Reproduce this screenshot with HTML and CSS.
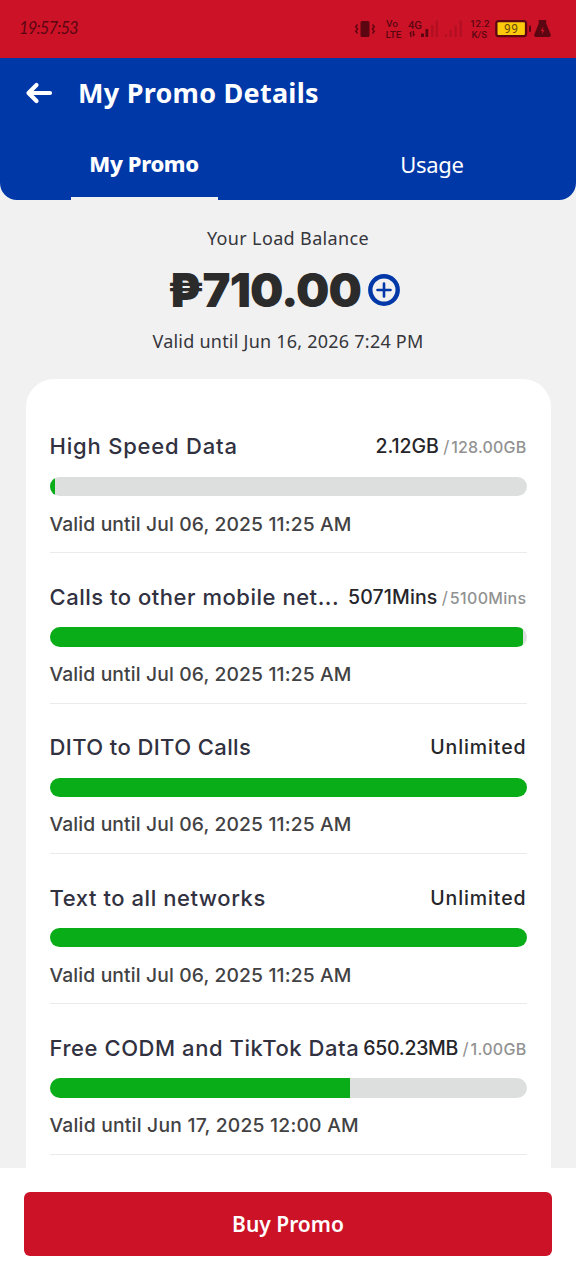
FILE: index.html
```html
<!DOCTYPE html>
<html lang="en">
<head>
<meta charset="utf-8">
<meta name="viewport" content="width=device-width">
<title>My Promo Details</title>
<link rel="stylesheet" href="styles.css">
</head>
<body>
<div class="screen">
  <div class="status">
    <span class="clock">19:57:53</span>
    <svg class="status-icons" width="200" height="24" viewBox="352 16 200 24">
      <g fill="#5c0612">
        <rect x="360.5" y="21" width="9" height="16" rx="1.5"/>
        <path d="M357.500 24.500l-1.700 2.300 1.700 2.200-1.700 2.200 1.700 2.300M372.500 24.500l1.700 2.300-1.700 2.200 1.700 2.200-1.700 2.300" fill="none" stroke="#5c0612" stroke-width="1.500"/>
        <g class="status-label">
          <text x="386" y="27.300" font-size="9.500" textLength="12" lengthAdjust="spacingAndGlyphs">Vo</text>
          <text x="385.500" y="37.700" font-size="9" textLength="16" lengthAdjust="spacingAndGlyphs">LTE</text>
          <text x="408" y="28.800" font-size="11" textLength="14" lengthAdjust="spacingAndGlyphs">4G</text>
          <text x="470" y="27.300" font-size="9.500" textLength="19.500" lengthAdjust="spacingAndGlyphs">12.2</text>
          <text x="471.500" y="37.700" font-size="9" textLength="15.500" lengthAdjust="spacingAndGlyphs">K/S</text>
        </g>
        <path d="M411.500 30.800l-2.700 2.700h1.300v3.500h1.400zM412.800 37l2.700-2.700h-1.300v-3.500h-1.400z"/>
        <path d="M421 33.500h3v3.500h-3zM425.500 29h2.700v8h-2.700z"/>
        <path d="M431 25h2.500v12h-2.500zM435.700 20.500h2.300v16.500h-2.300z" opacity=".22"/>
        <path d="M445 34h2v3h-2zM449.500 30h2.200v7h-2.200zM454.500 25.500h2.200v11.500h-2.200zM459.500 20.500h2.300v16.500h-2.300z" opacity=".22"/>
        <rect x="495.200" y="20" width="32" height="17.200" rx="3.500"/>
        <rect x="497.500" y="22.300" width="27.400" height="12.600" rx="1" fill="#fdc90b"/>
        <rect x="529" y="25.500" width="2" height="6.500" rx="1"/>
        <path d="M538.700 20h7.500v3.500l4.300 10.500q1 3-1.500 3h-13q-2.500 0-1.500-3l4.200-10.500z"/>
        <path d="M543.500 26.500l-3 4.500h1.900l-.700 3.500 3-4.500h-1.900z" fill="#cc1227"/>
        <text class="battery-level" x="504" y="33" font-size="12" textLength="14">99</text>
      </g>
    </svg>
  </div>

  <header class="header">
    <div class="titlebar">
      <svg class="back" width="28" height="22" viewBox="0 0 28 22" fill="none" stroke="#fff" stroke-width="4.200" stroke-linecap="round" stroke-linejoin="round"><path d="M11.500 3L3.500 11l8 8M4 11H25"/></svg>
      <h1 class="title">My Promo Details</h1>
    </div>
    <nav class="tabs">
      <div class="tab tab-active"><span class="tab-label">My Promo</span></div>
      <div class="tab"><span class="tab-label">Usage</span></div>
    </nav>
  </header>

  <main class="content">
    <section class="balance">
      <div class="balance-label">Your Load Balance</div>
      <div class="balance-row">
        <span class="amount">₱710.00</span>
        <svg width="32" height="32" viewBox="0 0 32 32" fill="none" stroke="#0038a8"><circle cx="16" cy="16" r="13.700" stroke-width="4.400"/><path d="M16 9.500v13M9.500 16h13" stroke-width="2.600" stroke-linecap="round"/></svg>
      </div>
      <div class="balance-valid">Valid until Jun 16, 2026 7:24 PM</div>
    </section>

    <section class="card">
      <article class="item">
        <div class="item-head"><span class="name name-data">High Speed Data</span><span class="usage"><b class="used used-data">2.12GB</b><span class="slash">/</span><span class="total total-data">128.00GB</span></span></div>
        <div class="bar"><div class="fill" style="width:1.1%"></div></div>
        <div class="valid">Valid until Jul 06, 2025 11:25 AM</div>
      </article>
      <article class="item">
        <div class="item-head"><span class="name name-calls">Calls to other mobile net...</span><span class="usage"><b class="used used-calls">5071Mins</b><span class="slash">/</span><span class="total total-calls">5100Mins</span></span></div>
        <div class="bar"><div class="fill fill-round" style="width:99.2%"></div></div>
        <div class="valid">Valid until Jul 06, 2025 11:25 AM</div>
      </article>
      <article class="item">
        <div class="item-head"><span class="name name-dito">DITO to DITO Calls</span><span class="usage"><b class="used used-unlimited">Unlimited</b></span></div>
        <div class="bar"><div class="fill" style="width:100%"></div></div>
        <div class="valid">Valid until Jul 06, 2025 11:25 AM</div>
      </article>
      <article class="item">
        <div class="item-head"><span class="name name-text">Text to all networks</span><span class="usage"><b class="used used-unlimited">Unlimited</b></span></div>
        <div class="bar"><div class="fill" style="width:100%"></div></div>
        <div class="valid">Valid until Jul 06, 2025 11:25 AM</div>
      </article>
      <article class="item">
        <div class="item-head"><span class="name name-free">Free CODM and TikTok Data</span><span class="usage"><b class="used used-free">650.23MB</b><span class="slash">/</span><span class="total total-free">1.00GB</span></span></div>
        <div class="bar"><div class="fill" style="width:63.1%"></div></div>
        <div class="valid valid-free">Valid until Jun 17, 2025 12:00 AM</div>
      </article>
    </section>
  </main>

  <footer class="footer"><button class="buy">Buy Promo</button></footer>
</div>
</body>
</html>
```
FILE: styles.css
```css
* { box-sizing: border-box; }
body { margin: 0; background: #f1f1f2; font-family: "Noto Sans", sans-serif; }
.screen { width: 576px; height: 1280px; display: flex; flex-direction: column; overflow: hidden; }

.status { height: 58px; flex: none; background: #cc1227; display: flex; justify-content: space-between; padding: 16px 24px 0 19px; }
.clock { font: italic 400 16.500px/25px Lato, sans-serif; color: #5c0612; letter-spacing: -0.85px; }
.status-icons { display: block; }
.status-label { font-family: Roboto, sans-serif; font-weight: 500; }
.battery-level { font-family: Roboto, sans-serif; fill: #6b4a08; }

.header { height: 142px; flex: none; background: #0038a8; border-radius: 0 0 17px 17px; color: #fff; display: flex; flex-direction: column; justify-content: space-between; }
.titlebar { display: flex; align-items: center; gap: 25px; padding: 15px 0 0 25px; height: 55px; }
.title { margin: 0; font-size: 27px; line-height: 40px; font-weight: 700; letter-spacing: 0.25px; white-space: nowrap; }
.tabs { display: grid; grid-template-columns: 1fr 1fr; height: 71px; }
.tab { width: 147px; margin: 0 auto; text-align: center; padding-top: 19px; font-size: 22px; line-height: 32px; letter-spacing: -0.3px; white-space: nowrap; }
.tab-active { padding-top: 18px; font-weight: 800; letter-spacing: -0.4px; border-bottom: 3px solid #f1f1f2; }

.content { flex: 1; min-height: 0; overflow: hidden; padding: 25px 25px 0 26px; }
.balance { height: 154px; padding-right: 1px; text-align: center; color: #36363b; white-space: nowrap; }
.balance-label { font-size: 18px; line-height: 26px; letter-spacing: 0.36px; }
.balance-row { display: flex; justify-content: center; align-items: center; gap: 7px; height: 77px; padding-right: 8px; }
.amount { font: 900 47px/60px Inter, sans-serif; letter-spacing: -0.9px; color: #2b2b2b; }
.balance-valid { font-size: 18px; line-height: 26px; letter-spacing: 0.23px; }

.card { background: #fff; border-radius: 28px 28px 0 0; padding: 23.8px 24.500px 0 23.500px; height: 820px; font-family: Inter, sans-serif; font-weight: 500; }
.item { height: 150.4px; padding-top: 29.6px; border-bottom: 1px solid #eaeaea; }
.item-head { display: flex; justify-content: space-between; align-items: center; height: 28px; white-space: nowrap; }
.name { font-size: 22px; color: #31313f; }
.name-data { letter-spacing: 0.8px; }
.name-calls { letter-spacing: 0.52px; }
.name-dito { letter-spacing: 0.4px; }
.name-text { letter-spacing: 0.56px; }
.name-free { letter-spacing: 0.56px; }
.usage { display: flex; align-items: baseline; }
.used { font-size: 19.500px; font-weight: 500; color: #26262a; }
.used-data { letter-spacing: -0.1px; }
.used-calls { letter-spacing: 0.1px; }
.used-unlimited { letter-spacing: 0.9px; }
.used-free { letter-spacing: -0.3px; }
.slash { font-size: 17px; color: #8f8f8f; font-weight: 400; margin: 0 1.800px 0 4.500px; }
.total { font-size: 16px; color: #929292; }
.total-data { letter-spacing: 0.2px; }
.total-calls { letter-spacing: 0.33px; }
.total-free { letter-spacing: 0.3px; }
.bar { height: 19.4px; margin-top: 16.400px; background: #dcdfde; border-radius: 10px; overflow: hidden; }
.fill { height: 100%; background: #08ad17; }
.fill-round { border-radius: 0 4px 4px 0; }
.valid { margin-top: 15.500px; font-size: 19.300px; line-height: 24px; letter-spacing: 0.13px; color: #424244; white-space: nowrap; }
.valid-free { letter-spacing: 0.22px; }

.footer { height: 112px; flex: none; background: #fff; padding: 24px; }
.buy { display: block; width: 100%; height: 64px; border: 0; border-radius: 6px; background: #cc1227; color: #fff; font: 600 21px/64px "Noto Sans", sans-serif; padding: 0; }
```
